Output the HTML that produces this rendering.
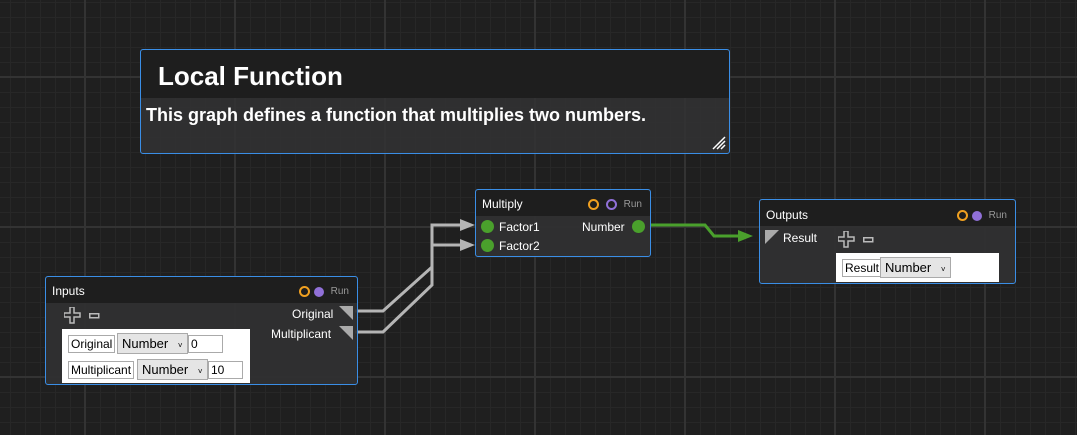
<!DOCTYPE html>
<html><head><style>
body{margin:0;width:1077px;height:435px;overflow:hidden;background:#1f1f1f;font-family:"Liberation Sans",sans-serif;position:relative}
.grid{position:absolute;inset:0;
background-image:
linear-gradient(to right,#333 0 2px,transparent 2px),
linear-gradient(to bottom,#333 0 2px,transparent 2px),
linear-gradient(to right,#272727 0 1px,transparent 1px),
linear-gradient(to bottom,#272727 0 1px,transparent 1px);
background-size:150px 150px,150px 150px,15px 15px,15px 15px;
background-position:84px 0,0 76px,10px 0,0 2px}
.node{position:absolute;border:1px solid #3a8ee6;border-radius:3px;background:rgba(48,48,50,.93);box-sizing:border-box;color:#fff}
.hdr{background:#1e1e1e;position:relative;font-size:12px;padding:0 6px;border-radius:3px 3px 0 0}
.run{position:absolute;right:8px;top:0;font-size:10px;color:#999;display:flex;align-items:center;gap:4px}
.oc{width:7px;height:7px;border-radius:50%;border:2px solid #f0a020;display:inline-block}
.pc{width:10px;height:10px;border-radius:50%;background:#9070d8;display:inline-block}
.po{width:7px;height:7px;border-radius:50%;border:2px solid #9070d8;display:inline-block}
.t{position:absolute;font-size:12px;color:#fff}
.dot{position:absolute;width:13px;height:13px;border-radius:50%;background:#4aa02c}
.tri{position:absolute;width:0;height:0;border-top:14px solid #aaa;border-left:14px solid transparent}
.tril{position:absolute;width:0;height:0;border-top:14px solid #aaa;border-right:14px solid transparent}
.wb{position:absolute;background:#fff;color:#000;font-size:12px}
.f{position:absolute;border:1px solid #aaa;background:#fff;height:18px;line-height:17px;padding:0 2px;box-sizing:border-box}
.s{position:absolute;border:1px solid #aaa;background:#e5e5e5;height:21px;line-height:19px;padding:0 4px;box-sizing:border-box;font-size:13px}
</style></head><body>
<div class="grid"></div>
<svg width="1077" height="435" style="position:absolute;left:0;top:0">
<g fill="none" stroke="#b5b5b5" stroke-width="3">
<polyline points="355,311 383,311 432,267 432,225 462,225"/>
<polyline points="355,332 383,332 432,285 432,245 462,245"/>
</g>
<polygon points="460,219 475,225 460,231" fill="#b5b5b5"/>
<polygon points="460,239 475,245 460,251" fill="#b5b5b5"/>
<polyline points="650,225 705,225 714,236 740,236" fill="none" stroke="#4aa02c" stroke-width="3"/>
<polygon points="738,230 753,236 738,242" fill="#4aa02c"/>
</svg>

<div class="node" style="left:140px;top:49px;width:590px;height:105px;background:rgba(50,50,52,.85)">
<div style="height:48px;background:#1e1e1e;border-radius:3px 3px 0 0"></div>
<div style="position:absolute;left:17px;top:11px;font-size:26px;font-weight:bold">Local Function</div>
<div style="position:absolute;left:5px;top:55px;font-size:18px;font-weight:bold">This graph defines a function that multiplies two numbers.</div>
<svg width="14" height="14" style="position:absolute;right:3px;bottom:3px"><path d="M1 13L13 1M5 13L13 5M9 13L13 9" stroke="#fff" stroke-width="1.5"/></svg>
</div>

<svg width="0" height="0" style="position:absolute"><defs>
<g id="plus"><path d="M6 0h4v6h6v4h-6v6h-4v-6h-6v-4h6z" fill="none" stroke="#bbb" stroke-width="1.5"/></g>
<g id="minus"><rect x="0.75" y="0.75" width="9" height="4" fill="none" stroke="#bbb" stroke-width="1.5"/></g>
</defs></svg>

<div class="node" style="left:45px;top:276px;width:313px;height:109px">
<div class="hdr" style="height:26px;line-height:28px">Inputs<span class="run" style="top:9px;line-height:10px"><span class="oc"></span><span class="pc"></span>&nbsp;Run</span></div>
<svg width="18" height="18" style="position:absolute;left:18px;top:30px"><use href="#plus"/></svg>
<svg width="12" height="7" style="position:absolute;left:43px;top:36px"><use href="#minus"/></svg>
<div class="t" style="left:246px;top:30px">Original</div>
<div class="t" style="left:225px;top:50px">Multiplicant</div>
<div class="tri" style="left:293px;top:29px"></div>
<div class="tri" style="left:293px;top:49px"></div>
<div class="wb" style="left:16px;top:52px;width:188px;height:54px">
<div class="f" style="left:6px;top:6px">Original</div>
<div class="s" style="left:55px;top:4px;width:71px">Number <span style="font-size:8px;margin-left:6px">˅</span></div>
<div class="f" style="left:126px;top:6px;width:35px">0</div>
<div class="f" style="left:6px;top:32px">Multiplicant</div>
<div class="s" style="left:75px;top:30px;width:71px">Number <span style="font-size:8px;margin-left:6px">˅</span></div>
<div class="f" style="left:146px;top:32px;width:35px">10</div>
</div>
</div>

<div class="node" style="left:475px;top:189px;width:176px;height:68px">
<div class="hdr" style="height:26px;line-height:28px">Multiply<span class="run" style="top:9px;line-height:10px"><span class="oc"></span><span class="po" style="margin-left:3px"></span>&nbsp;Run</span></div>
<div class="dot" style="left:5px;top:30px"></div><div class="t" style="left:23px;top:30px">Factor1</div>
<div class="dot" style="left:5px;top:49px"></div><div class="t" style="left:23px;top:49px">Factor2</div>
<div class="t" style="left:106px;top:30px">Number</div><div class="dot" style="left:156px;top:30px"></div>
</div>

<div class="node" style="left:759px;top:199px;width:257px;height:85px">
<div class="hdr" style="height:26px;line-height:30px">Outputs<span class="run" style="top:10px;line-height:10px"><span class="oc"></span><span class="pc"></span>&nbsp;Run</span></div>
<div class="tril" style="left:5px;top:30px"></div>
<div class="t" style="left:23px;top:31px">Result</div>
<svg width="18" height="18" style="position:absolute;left:78px;top:31px"><use href="#plus"/></svg>
<svg width="12" height="7" style="position:absolute;left:103px;top:37px"><use href="#minus"/></svg>
<div class="wb" style="left:76px;top:53px;width:163px;height:29px">
<div class="f" style="left:6px;top:6px">Result</div>
<div class="s" style="left:44px;top:4px;width:71px">Number <span style="font-size:8px;margin-left:6px">˅</span></div>
</div>
</div>
</body></html>
